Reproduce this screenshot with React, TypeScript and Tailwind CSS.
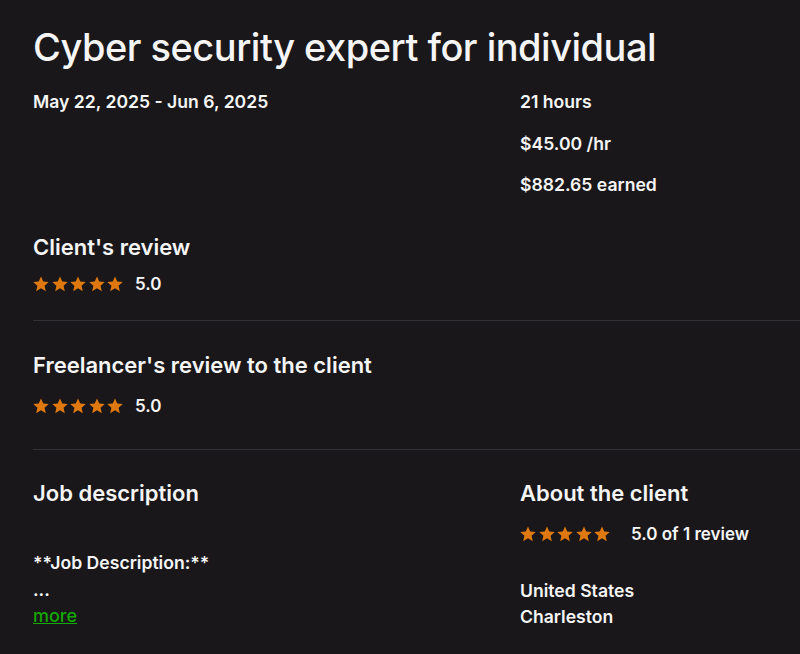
import React from "react";

const Star = () => (
  <svg width="16" height="16" viewBox="0 0 24 24" className="shrink-0">
    <path
      d="M12 .8l3.4 7.5 8.2.8-6.2 5.5 1.8 8.1L12 18.5l-7.2 4.2 1.8-8.1L.4 9.1l8.2-.8z"
      fill="#df780e"
    />
  </svg>
);

const Stars = () => (
  <div className="flex items-center gap-[2.5px]">
    {[0, 1, 2, 3, 4].map((i) => (
      <Star key={i} />
    ))}
  </div>
);

const Rating = ({ label, gap = "ml-3" }: { label: string; gap?: string }) => (
  <div className="flex items-center h-6">
    <Stars />
    <span className={`${gap} text-[17px] font-semibold leading-6`}>{label}</span>
  </div>
);

export default function App() {
  return (
    <div
      className="min-h-[654px] w-full bg-[#19171a] text-[#f5f5f5] pl-[33px] pt-[23px] overflow-hidden"
      style={{ fontFamily: "Inter, 'Liberation Sans', sans-serif" }}
    >
      <h1 className="text-[38px] font-medium leading-[48px] tracking-[-0.5px]">
        Cyber security expert for individual
      </h1>

      <div className="grid grid-cols-[487px_1fr] mt-[19px]">
        <p className="text-[17.6px] font-semibold leading-6">May 22, 2025 - Jun 6, 2025</p>
        <div className="flex flex-col gap-[17.5px] text-[17.6px] font-semibold leading-6">
          <p>21 hours</p>
          <p>$45.00 /hr</p>
          <p>$882.65 earned</p>
        </div>
      </div>

      <section className="mt-[36px] pb-[24px] border-b border-[#333135]">
        <h2 className="text-[22px] font-semibold leading-7">Client's review</h2>
        <div className="mt-[11px]">
          <Rating label="5.0" />
        </div>
      </section>

      <section className="pt-[30px] pb-[31px] border-b border-[#333135]">
        <h2 className="text-[22px] font-semibold leading-7">Freelancer's review to the client</h2>
        <div className="mt-[15px]">
          <Rating label="5.0" />
        </div>
      </section>

      <div className="grid grid-cols-[487px_1fr] pt-[29px]">
        <div>
          <h2 className="text-[22px] font-semibold leading-7">Job description</h2>
          <p className="mt-[44px] text-[17.6px] font-semibold leading-6">**Job Description:**</p>
          <p className="text-[17.6px] font-semibold leading-[29px]">...</p>
          <a href="#" className="text-[18px] font-medium leading-6 text-[#14a800] underline">
            more
          </a>
        </div>
        <div>
          <h2 className="text-[22px] font-semibold leading-7">About the client</h2>
          <div className="mt-[15px]">
            <Rating label="5.0 of 1 review" gap="ml-[21px]" />
          </div>
          <p className="mt-[32px] text-[17.6px] font-semibold leading-[26px]">United States</p>
          <p className="text-[17.6px] font-semibold leading-[26px]">Charleston</p>
        </div>
      </div>
    </div>
  );
}
